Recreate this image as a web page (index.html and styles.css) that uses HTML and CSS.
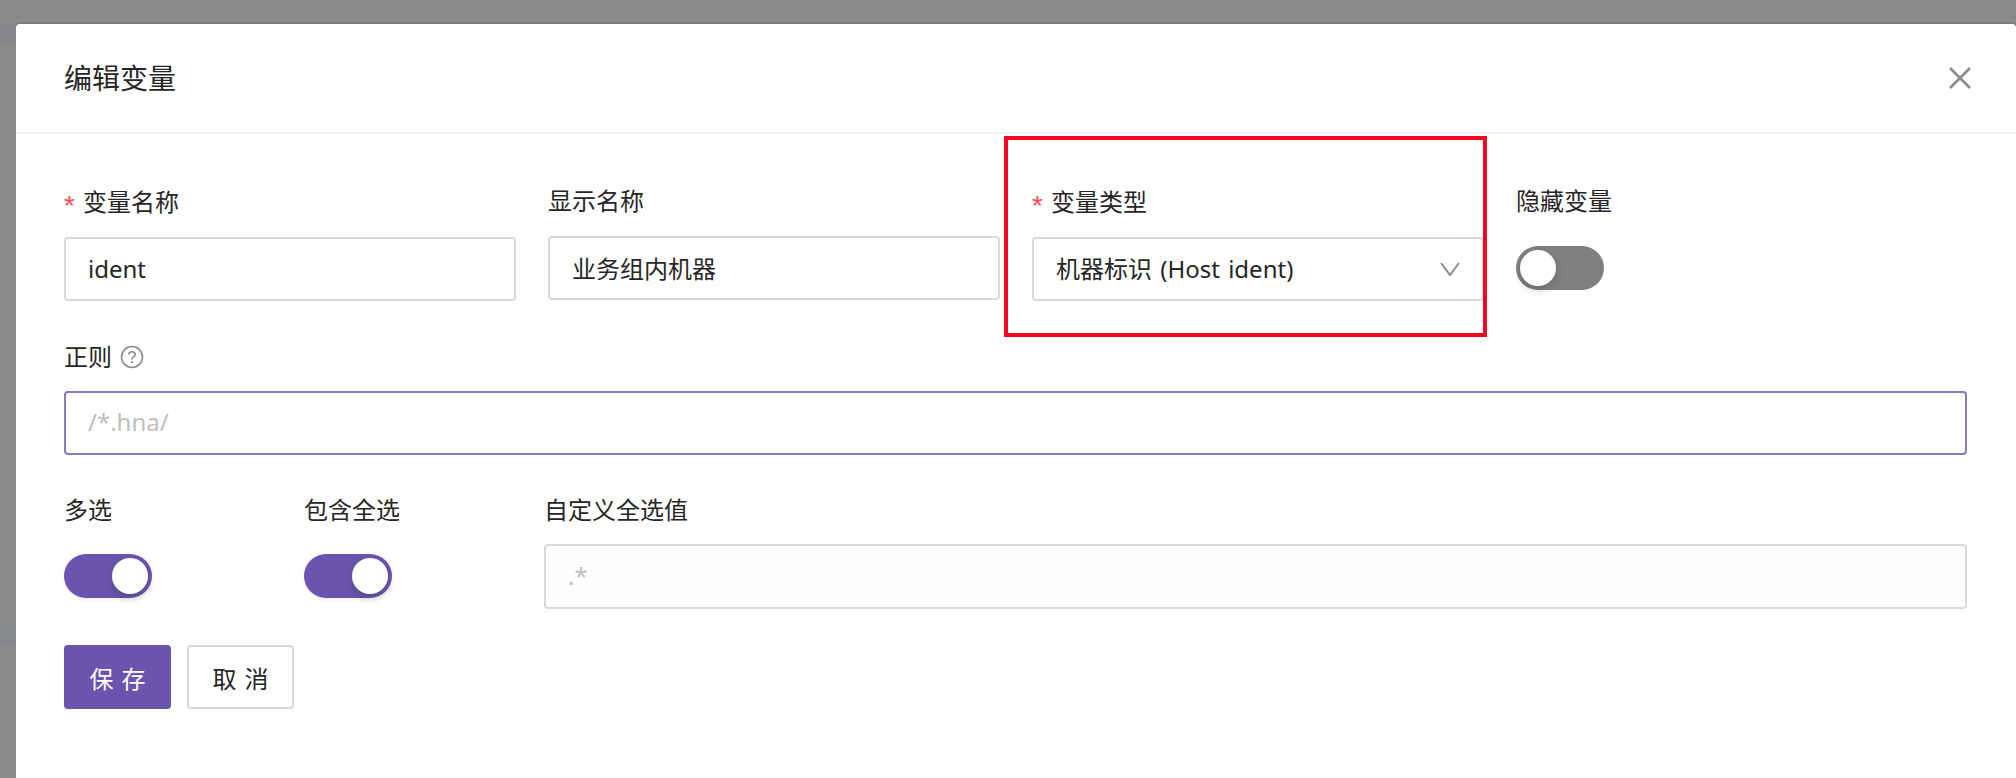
FILE: index.html
```html
<!DOCTYPE html>
<html lang="zh-CN">
<head>
  <meta charset="UTF-8" />
  <title>编辑变量</title>
  <link rel="stylesheet" href="styles.css">
</head>
<body>
  <div class="modal">
    <header class="modal-header">
      <h1>编辑变量</h1>
      <svg class="close-icon" width="22" height="22" viewBox="0 0 22 22"><path d="M1 1L21 21M21 1L1 21"/></svg>
    </header>

    <form class="modal-body">
      <div class="row row-first">
        <div class="field">
          <label class="required">变量名称</label>
          <input type="text" value="ident" />
        </div>
        <div class="field field-up">
          <label>显示名称</label>
          <input type="text" value="业务组内机器" />
        </div>
        <div class="field">
          <label class="required">变量类型</label>
          <div class="select">
            <span class="select-value">机器标识 (Host ident)</span>
            <svg class="chevron" width="20" height="14" viewBox="0 0 20 14"><path d="M1 1L10 13L19 1"/></svg>
          </div>
        </div>
        <div class="field field-up field-switch">
          <label>隐藏变量</label>
          <div class="switch-wrap"><span class="switch"><span class="knob"></span></span></div>
        </div>
      </div>

      <div class="row-regex">
        <label>正则
          <svg class="help-icon" width="24" height="24" viewBox="0 0 24 24">
            <circle cx="12" cy="12" r="10.5"/>
            <path d="M8.8 9.6C8.8 7.8 10.2 6.8 12 6.8C13.8 6.8 15.2 7.9 15.2 9.5C15.2 11.6 12 11.8 12 14.4"/>
            <circle class="dot" cx="12" cy="17.2" r="1.1"/>
          </svg>
        </label>
        <input class="focused" type="text" placeholder="/*.hna/" />
      </div>

      <div class="row row-third">
        <div class="field field-multi">
          <label>多选</label>
          <div class="switch-wrap"><span class="switch on"><span class="knob"></span></span></div>
        </div>
        <div class="field field-all">
          <label>包含全选</label>
          <div class="switch-wrap"><span class="switch on"><span class="knob"></span></span></div>
        </div>
        <div class="field field-grow">
          <label>自定义全选值</label>
          <input class="soft" type="text" placeholder=".*" />
        </div>
      </div>

      <div class="actions">
        <button type="button" class="btn btn-primary"><span>保存</span></button>
        <button type="button" class="btn"><span>取消</span></button>
      </div>
    </form>

    <div class="highlight"></div>
  </div>
</body>
</html>
```

FILE: styles.css
```css
html, body {
  height: 100%;
}
body {
  margin: 0;
  overflow: hidden;
  background: linear-gradient(#8a8a8a 24px, #85878b 24px, #85878b 44px, #8a8a8a 44px, #8a8a8a 624px, #85888c 624px, #85888c 644px, #8a8a8a 644px);
  color: #262626;
  font-family: "Noto Sans", "Noto Sans CJK SC", sans-serif;
  font-size: 24px;
}
.modal {
  position: relative;
  margin: 24px 0 0 16px;
  height: 754px;
  background: #fff;
  border-radius: 4px 4px 0 0;
  box-shadow: 0 -2px 0 #7c7c7c;
}
.modal-header {
  display: flex;
  align-items: center;
  justify-content: space-between;
  height: 108px;
  padding: 0 45px 0 48px;
  border-bottom: 2px solid #f0f0f0;
}
.modal-header h1 {
  margin: 0;
  font-size: 28px;
  font-weight: 400;
  line-height: 40px;
}
.close-icon {
  margin-bottom: 1px;
}
.close-icon path {
  fill: none;
  stroke: #8a8a8a;
  stroke-width: 2.6;
}
.modal-body {
  padding: 46px 49px 0 48px;
}
.row {
  display: flex;
  align-items: flex-start;
  gap: 32px;
}
.field {
  width: 452px;
}
.field-up {
  margin-top: -1px;
}
.field-switch {
  width: 200px;
}
label {
  display: block;
  height: 44px;
  margin-bottom: 13px;
  line-height: 44px;
  white-space: nowrap;
}
.required::before {
  content: "*";
  display: inline-block;
  width: 19px;
  color: #ff4d4f;
  font-family: "Liberation Sans", sans-serif;
  font-size: 28px;
  line-height: 1;
  vertical-align: -4px;
}
input {
  display: block;
  width: 100%;
  height: 64px;
  padding: 0 22px 2px;
  box-sizing: border-box;
  border: 2px solid #d9d9d9;
  border-radius: 4px;
  background: #fff;
  color: #262626;
  font-family: inherit;
  font-size: 24px;
  outline: none;
}
input::placeholder {
  color: #bfbfbf;
}
input.focused {
  padding-bottom: 4px;
  border-color: #8c78c2;
}
input.soft {
  height: 65px;
  background: #fefefe;
}
.select {
  display: flex;
  align-items: center;
  justify-content: space-between;
  height: 64px;
  padding: 0 22px;
  box-sizing: border-box;
  border: 2px solid #d9d9d9;
  border-radius: 4px;
}
.select-value {
  margin-bottom: 3px;
  word-spacing: 2px;
}
.chevron path {
  fill: none;
  stroke: #8a8a8a;
  stroke-width: 2;
}
.switch-wrap {
  display: flex;
  align-items: center;
  height: 64px;
}
.switch {
  display: flex;
  width: 88px;
  height: 44px;
  padding: 4px;
  box-sizing: border-box;
  border-radius: 22px;
  background: #808080;
}
.switch.on {
  justify-content: flex-end;
  background: #6c53ae;
  box-shadow: 0 2px 4px rgba(0, 0, 0, 0.06);
}
.knob {
  width: 36px;
  height: 36px;
  border-radius: 50%;
  background: #fff;
  box-shadow: 0 4px 8px rgba(0, 35, 11, 0.2);
}
.row-regex {
  margin-top: 34px;
}
.row-regex label {
  display: flex;
  align-items: center;
  gap: 8px;
  margin-bottom: 12px;
}
.help-icon circle {
  fill: none;
  stroke: #8a8a8a;
  stroke-width: 1.6;
}
.help-icon path {
  fill: none;
  stroke: #8a8a8a;
  stroke-width: 1.6;
}
.help-icon .dot {
  fill: #8a8a8a;
  stroke: none;
}
.row-third {
  margin-top: 33px;
  gap: 0;
}
.row-third label {
  margin-bottom: 12px;
}
.field-multi {
  width: 240px;
}
.field-all {
  width: 240px;
}
.field-grow {
  flex: 1;
}
.actions {
  display: flex;
  gap: 16px;
  margin-top: 36px;
}
.btn {
  width: 107px;
  height: 64px;
  padding: 0;
  border: 2px solid #d9d9d9;
  border-radius: 4px;
  background: #fff;
  color: #262626;
  font-family: inherit;
  font-size: 24px;
  box-shadow: 0 2px 0 rgba(0, 0, 0, 0.015);
}
.btn span {
  letter-spacing: 0.34em;
  margin-right: -0.34em;
}
.btn-primary {
  border-color: #6c53ae;
  background: #6c53ae;
  color: #fff;
}
/* red annotation box from the screenshot */
.highlight {
  position: absolute;
  top: 112px;
  left: 988px;
  width: 475px;
  height: 193px;
  border: 4px solid #f5071f;
}
```
